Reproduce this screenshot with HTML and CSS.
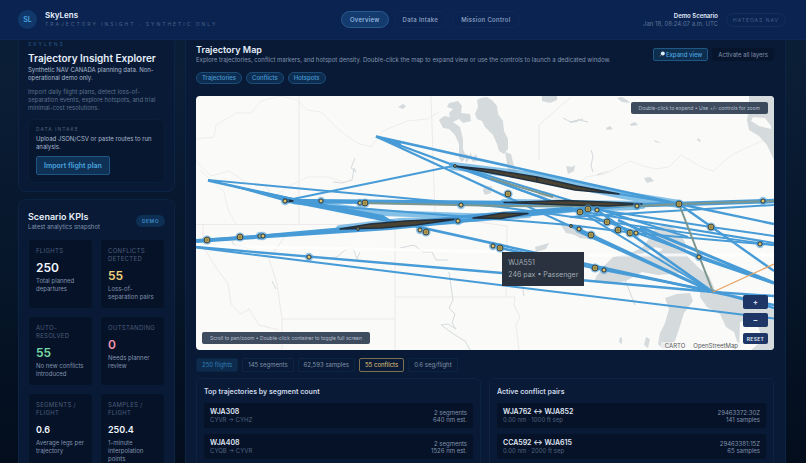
FILE: index.html
```html
<!DOCTYPE html>
<html lang="en">
<head>
<meta charset="utf-8">
<meta name="viewport" content="width=device-width, initial-scale=1">
<title>SkyLens</title>
<link rel="stylesheet" href="styles.css">
</head>
<body>
<header class="topbar">
  <div class="brand">
    <span class="logo">SL</span>
    <div>
      <div class="brand-name">SkyLens</div>
      <div class="brand-tag">TRAJECTORY INSIGHT · SYNTHETIC ONLY</div>
    </div>
  </div>
  <nav class="nav">
    <a class="nav-link active" href="#overview">Overview</a>
    <a class="nav-link" href="#intake">Data Intake</a>
    <a class="nav-link" href="#mission">Mission Control</a>
  </nav>
  <div class="status">
    <div class="scenario">
      <strong>Demo Scenario</strong>
      <span>Jan 18, 08:24:07 a.m. UTC</span>
    </div>
    <span class="hateoas">HATEOAS NAV</span>
  </div>
</header>
<div class="layout">
  <aside class="sidebar">
    <section class="card intro">
      <div class="eyebrow">SKYLENS</div>
      <h1>Trajectory Insight Explorer</h1>
      <p class="lead">Synthetic NAV CANADA planning data. Non-operational demo only.</p>
      <p class="muted">Import daily flight plans, detect loss-of-separation events, explore hotspots, and trial minimal-cost resolutions.</p>
      <div class="intake" id="intake">
        <div class="intake-label">DATA INTAKE</div>
        <p class="lead">Upload JSON/CSV or paste routes to run analysis.</p>
        <button class="primary" type="button">Import flight plan</button>
      </div>
    </section>
    <section class="card kpis">
      <div class="kpi-head">
        <div>
          <h2>Scenario KPIs</h2>
          <p class="sub">Latest analytics snapshot</p>
        </div>
        <span class="demo">DEMO</span>
      </div>
      <div class="kpi-grid">
        <div class="kpi"><div class="kpi-label">FLIGHTS</div><div class="kpi-value">250</div><p>Total planned departures</p></div>
        <div class="kpi"><div class="kpi-label">CONFLICTS DETECTED</div><div class="kpi-value amber">55</div><p>Loss-of-separation pairs</p></div>
        <div class="kpi"><div class="kpi-label">AUTO-RESOLVED</div><div class="kpi-value green">55</div><p>No new conflicts introduced</p></div>
        <div class="kpi"><div class="kpi-label">OUTSTANDING</div><div class="kpi-value pink">0</div><p>Needs planner review</p></div>
        <div class="kpi"><div class="kpi-label">SEGMENTS / FLIGHT</div><div class="kpi-value small">0.6</div><p>Average legs per trajectory</p></div>
        <div class="kpi"><div class="kpi-label">SAMPLES / FLIGHT</div><div class="kpi-value small">250.4</div><p>1-minute interpolation points</p></div>
      </div>
    </section>
  </aside>
  <main class="card main" id="overview">
    <div class="main-head">
      <div>
        <h2>Trajectory Map</h2>
        <p class="sub">Explore trajectories, conflict markers, and hotspot density. Double-click the map to expand view or use the controls to launch a dedicated window.</p>
      </div>
      <div class="actions">
        <button class="action expand" type="button"><svg class="lens" viewBox="0 0 6 6" aria-hidden="true"><path d="M.4 5.4 2.2 3.8" stroke="#8a6d56" stroke-width="1"/><circle cx="3.8" cy="2.4" r="2" fill="#dcecf8"/></svg>Expand view</button>
        <button class="action" type="button">Activate all layers</button>
      </div>
    </div>
    <div class="chips">
      <button class="chip" type="button">Trajectories</button>
      <button class="chip" type="button">Conflicts</button>
      <button class="chip" type="button">Hotspots</button>
    </div>
    <div class="map">
      <svg class="map-canvas" viewBox="196 96 578 254" preserveAspectRatio="xMidYMid slice" role="img" aria-label="Trajectory map">
        <defs>
          <g id="m"><circle r="4.2" fill="#439bd9" opacity=".55"/><circle r="2.1" fill="#dcc46c" stroke="#24303a" stroke-width="1"/></g>
          <g id="r"><circle r="4.6" fill="#439bd9" opacity=".6"/><circle r="2.9" fill="#c9b158" stroke="#3a4040" stroke-width="1"/><circle r="1.1" fill="#e8cf70" stroke="#57512f" stroke-width=".7"/></g>
          <g id="s"><circle r="1.4" fill="#b4a561" stroke="#203244" stroke-width="1"/></g>
        </defs>
        <rect x="196" y="96" width="578" height="254" fill="#fafaf8"/>
        <g class="borders">
          <path d="M299 96V224M196 224.500H430M431 96l4 120 72 10-1 71M395 224v126M395 297h120l-1 8 6 12-4 8 3 25M282 350v-31h113M539 160v-35l32-28M282 319l-5-35-8-25 10-14 8-12M203 224v22l12 20 13 18 3 20 10 10 8-5 10 16 20 5"/>
        </g>
        <g class="roads">
          <path d="M196 139l18-2 2-12 20-12h15l10-12 20-5 16 4 10 10 14 2 18 18 18 13 14 4 12-16 24-10 20-2 12-7M196 161l15 15 18-5 18 12 18 2 8 12 20-13 15-7h20l16 5M200 170l24 22 4 18 8 14M585 177l20-3 25-13 10 4 15 4 14-2 12-12 20 12 12 4 20-17 20-9 20-9 8-7M587 178l-14 5"/>
        </g>
        <g class="rivers">
          <path d="M333 182l9 1 10-3 2-12 2 4-5-4 4-10M323 259l14-2 8-7 8-2 4 11 3-7M400 248l14-3 9 7h9l4 8h12M449 272l4 28-4 8 6 6-3 9 4 6-8-5-7 1 14 10 10 6 7 12M563 118l8 4 8-2 9 2M570 122l13-3M526 272l-4 12 2 12M591 150l2 6-2 10 2 6M248 248l-14-3-2-4M272 281l4 8M292 335l4-3v10M621 270l14 35"/>
        </g>
        <g class="water">
          <path d="M477 100l4-2 6-1 6 4 4 5 1 8 5 7 1 10 4 8v10l-4 5-5-3-2-7-4-9-8-8-3-6-5-2-2-5 3-7z"/>
          <path d="M449 103l9-2 4 5-1 7 9 1 1 7-8 2-4-4-6 3 7 5 3 12v10l3 8-4 5-3-4 0-14-4-9-6-6-6-1-4-8 5-4 6 1-1-4 4-4-6-2z"/>
          <path d="M505 152l6 2 3 12 5 8-6 5-5-9zM465 153l4 3 2-4 1 7 4-5 2 7-5 1-3-4-4 5zM484 187l8-1-1 7-6 2-2-4zM542 96h15v4l-7 3-8-2zM566 166l6 1 3-2-1 6-6 3zM398 107l5-3 3 2-3 3zM535 247l14-4-3 6-10 3zM536 195l8-4 10 3 7 5-4 1-9-3-8 1z"/>
          <path d="M617 98l5-1 5 3 3 3-8-1zM630 124l5-2 3 3-7 1zM606 128l4-2 3 3-6 1zM570 122l10-3-3 3-7 1zM698 138l3 3-1 1-3-2zM654 140l7 3-6-1zM597 174l15-4-14 5zM644 178l6-1 4 4-7 2z"/>
          <path d="M749 96h25v64l-7-15-8-9-10-6-2-10 2-12z"/>
          <path d="M596 277l7-10 10-10 18-4 12-6 13-19 10-4 9 5 10 13 2 14 12 12 10 8 6 14-9-3-22-14-26 2-16-3-16 9-18 3-14-2z"/>
          <path d="M665 298l12-4 13-1 3 8-9 12-4 13-5 15-12 8-5-5 2-11 5-10 4-14zM700 286l14 4 30 7 10 10 20 2v41h-34l-6-18-8-5-6-13-13-7-7-10z"/>
          <path d="M559 222l12 3 9 7-1 5-7-3-6-1zM578 232l20 3-8 4-11-1zM646 337l4 2-2 9-4-3zM620 337l2 1v6l-3-2z"/>
        </g>
        <path class="land" d="M751 121l2-4 12 1 6 8v3l-12-3zM641 255l14-8 8 2-6 5zM697 285l12 4-3 4-7-3zM740 322l15-4 8 22-12 10h-12z"/>
        <path d="M196 246l120 2 190 4M587 255h187" stroke="#fff" stroke-width="3" opacity=".75"/>
        <g class="halo">
          <path d="M453 166l80 10 90 19 56 9M504 203l138 2M340 229l60-7 60-2M473 218l55-4" stroke-width="8"/>
          <path d="M293 201l90 12 110 4 84-8 60-2" stroke-width="6"/>
        </g>
        <g class="tracks">
          <path d="M208 180l293 27 273 38" stroke-width="1.8"/>
          <path d="M208 180.500l505 111.500" stroke-width="2.6"/>
          <path d="M208 180l85 18 90 17 14 9-110-22z" class="wedge"/>
          <path d="M284 201l220 2 138 2 37-1 95-3" stroke-width="4.500"/>
          <path d="M293 199l160-33" stroke-width="2"/>
          <path d="M376 136.500l303 67.500" stroke-width="2.500"/>
          <path d="M376 136.500l398 147" stroke-width="2.200"/>
          <path d="M376 136.500l337 155.500" stroke-width="2.200"/>
          <path d="M376 136l24 5 2 6z" class="wedge"/>
          <path d="M453 166l126 45 134 81M453 166l226 38M460 167l112 34 116 36" stroke-width="2"/>
          <path d="M196 241l194-13 190-19 50-4" stroke-width="4"/>
          <path d="M196 241l65-5 100-9 120-12 92-7" stroke-width="3"/>
          <path d="M196 247l306 26 211 19 61 4" stroke-width="2.400"/>
          <path d="M196 247.500l324 40 254 31" stroke-width="2"/>
          <path d="M293 203l277 22 64 8 140 12M570 217l204-12M587 208l124 19 63 9M560 208l214 35" stroke-width="2"/>
          <path d="M679 204l95 67M679 204l95 20" stroke-width="2.400"/>
          <path d="M597 210l116 82M570 225l143 67M580 232l133 60M500 248l94 20 119 23" stroke-width="2.600"/>
          <path d="M618 220l80 37 76 26M640 227l134 56" stroke-width="3"/>
          <path d="M710 290l64 18M713 292l61 13" stroke-width="2.500"/>
        </g>
        <g class="olive"><path d="M360 203l145 3h80l55 0 39-2 95-3M679 204l34 88M490 178l63 19"/></g>
        <path d="M713 292l61-28" stroke="#e8a15e" stroke-width="1.200"/>
        <g class="dark">
          <path d="M454 166l40 4 43 7 40 9 42 8-44-4-38-8-40-8z"/>
          <path d="M504 202.500l60-2 40 1.500 38 2-34 2-40-1z"/>
          <path d="M340 229l30-5 35-3 53-2-42 6-35 3z"/>
          <path d="M473 218l30-5 25 .5-27 5z"/>
          <path d="M284 199l9 2-9 1zM537 177v5"/>
        </g>
        <use href="#m" x="285" y="201"/><use href="#m" x="321" y="201"/><use href="#m" x="360" y="203"/><use href="#r" x="365" y="203"/>
        <use href="#r" x="207" y="240"/><use href="#r" x="240" y="237"/><use href="#m" x="260" y="236"/><use href="#m" x="263" y="236"/>
        <use href="#m" x="309" y="257"/><use href="#s" x="358" y="229"/><use href="#s" x="455" y="166"/><use href="#r" x="508" y="194"/>
        <use href="#m" x="461" y="205"/><use href="#m" x="458" y="221"/><use href="#m" x="420" y="230"/><use href="#r" x="426" y="232"/>
        <use href="#m" x="493" y="246"/><use href="#r" x="500" y="248"/><use href="#s" x="571" y="226"/><use href="#m" x="579" y="229"/>
        <use href="#r" x="580" y="212"/><use href="#r" x="588" y="209"/><use href="#m" x="597" y="210"/><use href="#m" x="637" y="206"/>
        <use href="#r" x="679" y="204"/><use href="#m" x="763" y="201"/><use href="#r" x="711" y="227"/><use href="#r" x="607" y="222"/>
        <use href="#r" x="618" y="230"/><use href="#r" x="630" y="233"/><use href="#m" x="636" y="233"/><use href="#r" x="591" y="235"/>
        <use href="#m" x="760" y="244"/><use href="#m" x="699" y="257"/><use href="#r" x="595" y="268"/><use href="#m" x="604" y="270"/>
      </svg>
      <div class="map-note top">Double-click to expand • Use +/- controls for zoom</div>
      <div class="map-note bottom">Scroll to pan/zoom • Double-click container to toggle full screen</div>
      <div class="tooltip"><div>WJA551</div><div>246 pax • Passenger</div></div>
      <div class="attribution"><a href="#carto">CARTO</a><a href="#osm">OpenStreetMap</a></div>
      <div class="zoom">
        <button type="button" aria-label="Zoom in">+</button>
        <button type="button" aria-label="Zoom out">−</button>
        <button class="reset" type="button">RESET</button>
      </div>
    </div>
    <div class="stats">
      <span class="stat blue">250 flights</span>
      <span class="stat">145 segments</span>
      <span class="stat">62,593 samples</span>
      <span class="stat gold">55 conflicts</span>
      <span class="stat">0.6 seg/flight</span>
    </div>
    <div class="panels">
      <section class="panel">
        <h3>Top trajectories by segment count</h3>
        <div class="row"><div><strong>WJA308</strong><span>CYVR → CYHZ</span></div><div class="row-end">2 segments<br>640 nm est.</div></div>
        <div class="row"><div><strong>WJA408</strong><span>CYQB → CYVR</span></div><div class="row-end">2 segments<br>1526 nm est.</div></div>
      </section>
      <section class="panel">
        <h3>Active conflict pairs</h3>
        <div class="row"><div><strong>WJA762 ↔ WJA852</strong><span>0.00 nm · 1000 ft sep</span></div><div class="row-end">29463372:30Z<br>141 samples</div></div>
        <div class="row"><div><strong>CCA592 ↔ WJA615</strong><span>0.00 nm · 2000 ft sep</span></div><div class="row-end">29463381:15Z<br>65 samples</div></div>
      </section>
    </div>
  </main>
</div>
</body>
</html>
```
FILE: styles.css
```css
* { box-sizing: border-box; }
html { scrollbar-width: none; background: #04101f; }
body {
  margin: 0;
  min-height: 100vh;
  font-family: Inter, "Liberation Sans", sans-serif;
  font-size: 6px;
  line-height: 8px;
  color: #a9b9cf;
  background: linear-gradient(180deg, #0b2038 0, #08192f 200px, #030d1c 463px);
}
h1, h2, h3, p { margin: 0; }
h1, h2 { color: #e6eefa; font-weight: 600; }
h1 { font-size: 10px; line-height: 12px; white-space: nowrap; }
h2 { font-size: 9px; line-height: 12px; }
a { color: inherit; text-decoration: none; }
button { font-family: inherit; margin: 0; padding: 0; line-height: inherit; }

.topbar {
  position: sticky;
  top: 0;
  z-index: 5;
  display: flex;
  justify-content: space-between;
  align-items: center;
  height: 40px;
  padding: 0 20px 0 18px;
  background: #0b2350;
  border-bottom: 1px solid #0e2a52;
}
.brand { display: flex; align-items: center; gap: 8px; }
.logo {
  display: grid;
  place-items: center;
  width: 19px;
  height: 19px;
  border-radius: 50%;
  background: #11386a;
  color: #4aa3df;
  font-size: 7px;
  font-weight: 600;
}
.brand-name { color: #e9f1fc; font-size: 8px; line-height: 10px; font-weight: 600; }
.brand-tag { color: #49618a; font-size: 5px; line-height: 9px; letter-spacing: 2px; white-space: nowrap; }
.nav { display: flex; gap: 5px; }
.nav-link {
  padding: 3px 8px;
  border: 1px solid #0f2a58;
  border-radius: 9px;
  color: #93a7c8;
  font-size: 6px;
  line-height: 9px;
  font-weight: 500;
  letter-spacing: 0.3px;
}
.nav-link.active { background: #143b6e; border-color: #2a5a90; color: #9fc0e4; }
.status { display: flex; align-items: center; gap: 8px; }
.scenario { text-align: right; color: #5c739a; }
.scenario strong, .scenario span { display: block; }
.scenario strong { color: #e3ecfa; font-weight: 600; }
.hateoas {
  padding: 2px 6px;
  border: 1px solid #142f5d;
  border-radius: 8px;
  color: #47608b;
  font-size: 5px;
  letter-spacing: 1px;
  white-space: nowrap;
}

.layout {
  display: grid;
  grid-template-columns: 157px minmax(0, 1fr);
  gap: 10px;
  padding: 0 20px 0 18px;
}
.sidebar { display: flex; flex-direction: column; gap: 7px; }
.card { background: #081a35; border: 1px solid #0c2443; border-radius: 8px; }
.intro { padding: 0 9px 8px; border-top: 0; border-radius: 0 0 8px 8px; }
.eyebrow { color: #28578a; font-size: 5px; letter-spacing: 2px; }
.intro h1 { margin: 4px 0 2px; }
.intro .muted { margin-top: 6px; color: #5d6f8b; }
.intake { margin-top: 7px; padding: 5px 7px 7px; border: 1px solid #0a1f3a; border-radius: 6px; background: #07172f; }
.intake-label { color: #4c607e; font-size: 5px; letter-spacing: 1px; margin-bottom: 2px; }
.primary {
  margin-top: 5px;
  padding: 4px 7px;
  border: 1px solid #1f5582;
  border-radius: 2px;
  background: #0f3155;
  color: #4aa3df;
  font-size: 7px;
  line-height: 9px;
  font-weight: 600;
}
.sub { color: #8193ae; }

.kpis { padding: 11px 9px; }
.kpi-head { display: flex; justify-content: space-between; align-items: center; }
.demo { padding: 2px 6px; border-radius: 8px; background: #0d2f54; color: #3d8cc7; font-size: 5px; font-weight: 600; letter-spacing: 0.5px; }
.kpi-grid { display: grid; grid-template-columns: 1fr 1fr; gap: 7px; margin-top: 8px; }
.kpi { min-height: 70px; padding: 7px; border: 1px solid #091c36; border-radius: 4px; background: #051228; color: #8293ac; }
.kpi-label { color: #4d5e79; letter-spacing: 0.3px; }
.kpi-value { margin: 6px 0 3px; color: #f1f6fd; font-size: 12px; line-height: 13px; font-weight: 600; }
.kpi-value.small { font-size: 9px; }
.kpi-value.amber { color: #f3d27c; }
.kpi-value.green { color: #78dba6; }
.kpi-value.pink { color: #ee92ac; }

.main { padding: 4px 11px 0 10px; border-top: 0; border-radius: 0; }
.main-head { display: flex; justify-content: space-between; align-items: center; }
.actions { display: flex; gap: 4px; }
.action { display: flex; align-items: center; gap: 1px; padding: 1px 5px; border: 1px solid transparent; border-radius: 2px; background: #07152c; color: #7f90aa; font-size: 6px; line-height: 9px; white-space: nowrap; }
.action.expand { border-color: #205784; background: #0e2e50; color: #4aa3df; font-weight: 500; }
.lens { width: 6px; height: 6px; fill: none; }
.chips { display: flex; gap: 4px; margin-top: 8px; }
.chip { padding: 1px 5px; border: 1px solid #1d4c76; border-radius: 7px; background: #0d2d50; color: #4a9bd4; font-size: 6px; line-height: 8px; font-weight: 500; }

.map { position: relative; height: 254px; margin-top: 12px; border-radius: 4px; overflow: hidden; }
.map-canvas { display: block; width: 100%; height: 100%; fill: none; }
.borders { stroke: #eee9ea; stroke-width: 1; }
.roads { stroke: #ededed; stroke-width: 1; }
.rivers { stroke: #d4dadd; stroke-width: 1; }
.water { fill: #d5dadd; }
.land { fill: #fafaf8; }
.halo { stroke: #55a8e0; opacity: 0.7; stroke-linecap: round; }
.tracks { stroke: #479bd6; }
.wedge { fill: #479bd6; stroke: none; }
.olive { stroke: #7d978f; stroke-width: 2; }
.dark { fill: #4b4332; stroke: #203040; stroke-width: 1.4; stroke-linejoin: round; }
.map-note { position: absolute; padding: 2px 8px; border-radius: 2px; background: rgba(42, 56, 78, 0.9); color: #b2bdcc; font-size: 5px; white-space: nowrap; }
.map-note.top { top: 6px; right: 6px; }
.map-note.bottom { bottom: 6px; left: 6px; }
.tooltip { position: absolute; left: 53%; top: 156px; padding: 5px 6px; background: #29323e; color: #a3abb5; font-size: 7px; line-height: 12px; white-space: nowrap; }
.attribution { position: absolute; right: 32px; bottom: 0; display: flex; gap: 8px; padding: 0 4px; background: rgba(250, 250, 248, 0.6); color: #58595b; font-size: 6px; }
.zoom { position: absolute; right: 6px; bottom: 6px; display: flex; flex-direction: column; gap: 4px; }
.zoom button { width: 25px; height: 14px; border: 0; border-radius: 2px; background: #1d3665; color: #e2eaf6; font-size: 8px; font-weight: 600; }
.zoom .reset { height: 11px; margin-top: 2px; font-size: 5px; letter-spacing: 0.3px; }

.stats { display: flex; gap: 4px; margin-top: 8px; }
.stat { padding: 2px 5px; border: 1px solid #0d2545; border-radius: 2px; color: #8192ac; }
.stat.blue { background: #0d2c4d; color: #327db8; }
.stat.gold { border-color: #7b704f; color: #e0c47a; }
.panels { display: grid; grid-template-columns: 1fr 1fr; gap: 8px; margin-top: 6px; }
.panel { display: flex; flex-direction: column; gap: 6px; padding: 8px 7px; border: 1px solid #0c2341; border-radius: 5px; }
h3 { color: #ccd8e9; font-size: 7px; line-height: 10px; font-weight: 600; }
.row { display: flex; justify-content: space-between; align-items: center; padding: 4px 6px; border-radius: 2px; background: #051228; }
.row strong, .row span { display: block; }
.row strong { color: #e0e9f6; font-size: 7px; line-height: 9px; font-weight: 600; }
.row span { color: #53647f; }
.row-end { color: #8091aa; line-height: 7px; text-align: right; }
```
